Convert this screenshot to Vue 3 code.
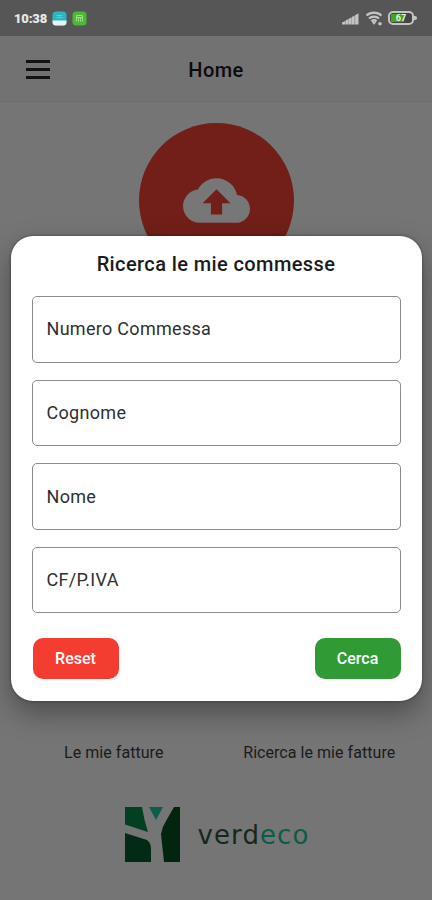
<script setup>
import { ref } from 'vue';

const fields = ref([
  { id: 'numero', label: 'Numero Commessa', value: '' },
  { id: 'cognome', label: 'Cognome', value: '' },
  { id: 'nome', label: 'Nome', value: '' },
  { id: 'cf', label: 'CF/P.IVA', value: '' },
]);

const showModal = ref(true);

const reset = () => {
  fields.value.forEach((field) => {
    field.value = '';
  });
}
</script>
<template>
  <main>
    <div class="status">
      <span class="time">10:38</span>
      <svg class="app" width="15" height="15" viewBox="0 0 15 15">
        <rect x="0.5" y="0.5" width="14" height="14" rx="3.5" fill="#2fb3bf" />
        <path d="M0.5 9.5h14v1.5a3.5 3.5 0 0 1-3.5 3.5h-7a3.5 3.5 0 0 1-3.5-3.5z" fill="#e4f4f4" />
        <path d="M4.5 4.5h6M4.5 6.5h6" stroke="#68cbd2" />
      </svg>
      <svg class="app second" width="15" height="15" viewBox="0 0 15 15">
        <rect x="0.5" y="0.5" width="14" height="14" rx="3.5" fill="#4fb735" />
        <path d="M4.5 10.5v-6h6v6M4 6.5h7M6.5 6.5v4M8.5 6.5v4" fill="none" stroke="#9be087" />
      </svg>
      <div class="system">
        <svg width="17" height="13" viewBox="0 0 17 13">
          <path d="M0 12.5v-2l3.3-1.6v3.6zM3.6 12.5v-4l2.8-1.4v5.4zM6.7 12.5v-5.7l2.8-1.4v7.1zM9.8 12.5v-7.4l2.9-1.5v8.9zM13.1 12.5v-9.200l3.400-2.100v11.300z" fill="#c4c4c4" />
        </svg>
        <svg class="wifi" width="18" height="15" viewBox="0 0 18 15">
          <path d="M1.5 4.5a11 11 0 0 1 15 0M4 7.5a7.5 7.5 0 0 1 10 0M6.5 10.3a3.8 3.8 0 0 1 5 0" fill="none" stroke="#c4c4c4" stroke-width="2.3" />
          <path d="M9 13.8l-2-2.3a3 3 0 0 1 4 0z" fill="#c4c4c4" />
          <circle cx="15" cy="12.7" r="1.8" fill="#c4c4c4" />
        </svg>
        <div class="battery">
          <span class="level"></span>
          <span class="percent">67</span>
        </div>
      </div>
    </div>
    <header>
      <button class="menu" aria-label="Menu" @click="showModal = false">
        <span></span><span></span><span></span>
      </button>
      <h1>Home</h1>
    </header>
    <div class="home">
      <button class="upload" aria-label="Upload">
        <svg width="67" height="67" viewBox="0 0 24 24">
          <path fill="#777" d="M19.35 10.04A7.49 7.49 0 0 0 12 4C9.11 4 6.6 5.64 5.35 8.04A5.994 5.994 0 0 0 0 14c0 3.31 2.69 6 6 6h13c2.76 0 5-2.24 5-5 0-2.64-2.05-4.78-4.65-4.96zM14 13v4h-4v-4H7l5-5 5 5h-3z" />
        </svg>
      </button>
      <nav>
        <span>Le mie fatture</span>
        <span>Ricerca le mie fatture</span>
      </nav>
      <div class="logo">
        <svg width="55" height="55" viewBox="0 0 55 55">
          <path d="M0 0h17q2 13 6 25L0 17.500z" fill="#053f22" />
          <path d="M24 0h14l-7 13z" fill="#0b5e48" />
          <path d="M0 26l22 7q4 3 4 9v13H0z" fill="#032a15" />
          <path d="M49 0h6v55H39l-3-28q1-7 5-13z" fill="#03240f" />
        </svg>
        <p>verd<b>eco</b></p>
      </div>
    </div>
    <div v-show="showModal" class="overlay">
      <form class="modal" @submit.prevent="showModal = false">
        <h2>Ricerca le mie commesse</h2>
        <input v-for="field in fields" :key="field.id" v-model="field.value" :placeholder="field.label">
        <div class="actions">
          <button type="button" class="reset" @click="reset()">Reset</button>
          <button type="submit" class="search">Cerca</button>
        </div>
      </form>
    </div>
  </main>
</template>
<style>
body {
  margin: 0;
}
</style>
<style scoped>
* {
  box-sizing: border-box;
}

main {
  position: relative;
  display: flex;
  flex-direction: column;
  height: 900px;
  width: 100%;
  overflow: hidden;
  background-color: #757575;
  font-family: Roboto, "Liberation Sans", sans-serif;
}

h1,
h2,
p {
  margin: 0;
}

button {
  border: none;
  padding: 0;
  font-family: inherit;
}

.status {
  display: flex;
  align-items: center;
  flex: none;
  height: 36px;
  padding: 0 18px 0 14px;
  background-color: #565656;
}

.time {
  width: 38px;
  color: #e8e8e8;
  font-size: 13px;
  font-weight: 900;
  letter-spacing: -0.2px;
}

.second {
  margin-left: 5px;
}

.system {
  display: flex;
  align-items: center;
  margin-left: auto;
}

.wifi {
  margin: 0 5px 0 6px;
}

.battery {
  position: relative;
  width: 26px;
  height: 14px;
  padding: 1px;
  border: 2px solid #c4c4c4;
  border-radius: 5px;
  background-color: #444;
}

.battery::after {
  content: "";
  position: absolute;
  right: -5px;
  top: 3px;
  width: 3px;
  height: 4px;
  border-radius: 0 2px 2px 0;
  background-color: #c4c4c4;
}

.level {
  display: block;
  width: 67%;
  height: 8px;
  background-color: #45a51c;
}

.percent {
  position: absolute;
  inset: 0;
  color: #e6f5df;
  font-size: 9px;
  font-weight: bold;
  line-height: 10px;
  text-align: center;
}

header {
  display: grid;
  grid-template-columns: 50px 1fr 50px;
  align-items: center;
  flex: none;
  height: 66px;
  border-bottom: 1px solid #6c6c6c;
  background-color: #727272;
}

.menu {
  display: flex;
  flex-direction: column;
  gap: 5px;
  width: 24px;
  margin-left: 26px;
  padding-top: 2px;
  background: none;
}

.menu span {
  height: 3px;
  background-color: #131313;
}

h1 {
  padding-top: 3px;
  color: #0b0b0b;
  font-size: 20px;
  font-weight: 500;
  letter-spacing: 0.4px;
  text-align: center;
}

.home {
  display: flex;
  flex-direction: column;
  align-items: center;
  padding-top: 21px;
}

.upload {
  display: flex;
  align-items: center;
  justify-content: center;
  width: 155px;
  height: 155px;
  margin-left: 1px;
  border-radius: 50%;
  background-color: #711f18;
}

nav {
  display: grid;
  grid-template-columns: 1fr 1fr;
  width: 411px;
  margin: 465px 0 0 1px;
  color: #1b1b1b;
  font-size: 16px;
  line-height: 20px;
  letter-spacing: 0.05px;
  text-align: center;
}

.logo {
  display: flex;
  align-items: center;
  gap: 17px;
  margin: 44px 0 0 3px;
}

.logo p {
  color: #142820;
  font-family: "DejaVu Sans", sans-serif;
  font-size: 26px;
  line-height: 30px;
  letter-spacing: 1.1px;
}

.logo b {
  color: #0d5b49;
  font-weight: normal;
}

.overlay {
  position: absolute;
  inset: 0;
  display: flex;
  align-items: center;
  justify-content: center;
  padding-top: 36px;
}

.modal {
  display: flex;
  flex-direction: column;
  gap: 17px;
  width: 411px;
  height: 465px;
  padding: 15px 21px 22px;
  border-radius: 22px;
  background-color: #fff;
  box-shadow: 0 12px 28px rgba(0, 0, 0, 0.35), 0 0 3px rgba(0, 0, 0, 0.4);
}

h2 {
  margin-bottom: 1.6px;
  color: #1b1b1b;
  font-size: 20px;
  font-weight: 500;
  line-height: 27px;
  letter-spacing: 0.4px;
  text-align: center;
}

input {
  flex: none;
  width: 100%;
  height: 66.6px;
  padding: 0 14px 1px;
  border: 1px solid #8c8c8c;
  border-radius: 5px;
  font-family: inherit;
  font-size: 18px;
  letter-spacing: 0.3px;
}

input::placeholder {
  color: #303030;
  opacity: 1;
}

.actions {
  display: flex;
  justify-content: space-between;
  margin-top: auto;
}

.actions button {
  width: 86px;
  height: 41px;
  border-radius: 10px;
  color: #fff;
  font-size: 16px;
  font-weight: 500;
}

.actions .reset {
  margin-left: 1px;
  background-color: #f43c31;
}

.actions .search {
  background-color: #309b35;
}
</style>
